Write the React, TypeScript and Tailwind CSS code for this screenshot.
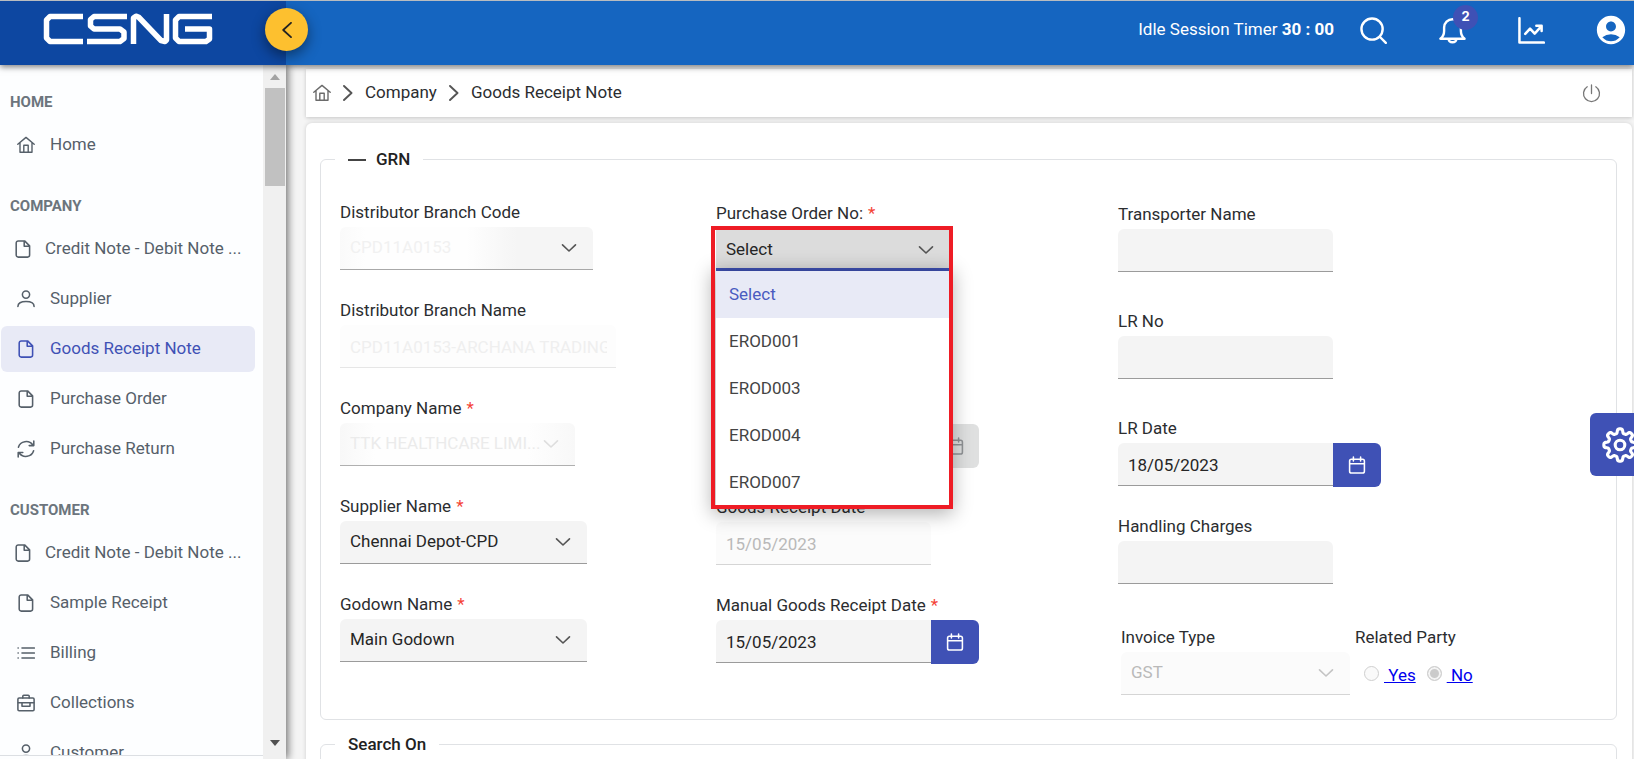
import React from "react";
import { MdAccountCircle } from "react-icons/md";

type IconProps = { className?: string };

function Glyph({ className = "size-[18px]", width = 1.55, box = 18, children }: { className?: string; width?: number; box?: number; children: React.ReactNode }) {
  return (
    <svg viewBox={`0 0 ${box} ${box}`} className={`shrink-0 ${className}`} fill="none" stroke="currentColor" strokeWidth={width} strokeLinecap="round" strokeLinejoin="round" aria-hidden="true">
      {children}
    </svg>
  );
}

const HomeIcon = ({ className }: IconProps) => (
  <Glyph className={className} width={1.4}>
    <path d="M.8 8.3 9 1.4l8.2 6.9M3 6.7v9.6h12V6.7M6.8 16V9.3h4.4V16" />
  </Glyph>
);
const FileIcon = ({ className }: IconProps) => (
  <Glyph className={className}>
    <path d="M4.2.9h6.4l5 5v9.2a2 2 0 0 1-2 2H4.2a2 2 0 0 1-2-2V2.900a2 2 0 0 1 2-2ZM10.200 1.200v5h5" />
  </Glyph>
);
const UserIcon = ({ className }: IconProps) => (
  <Glyph className={className}>
    <circle cx="9" cy="4.6" r="3.6" />
    <path d="M.9 16.4c0-3.300 3-4.900 8.100-4.900s8.100 1.600 8.100 4.900" />
  </Glyph>
);
const RefreshIcon = ({ className }: IconProps) => (
  <Glyph className={className}>
    <path d="M1.400 7.200A8 7.600 0 0 1 15.800 5M16.800 1v4.600h-4.600M16.600 10.800A8 7.600 0 0 1 2.200 13M1.200 17v-4.600h4.600" />
  </Glyph>
);
const ListIcon = ({ className }: IconProps) => (
  <Glyph className={className} width={1.6}>
    <path d="M5 4h12.300M5 9h12.300M5 14h12.300M1.100 4h.1M1.100 9h.1M1.100 14h.1" />
  </Glyph>
);
const BriefcaseIcon = ({ className }: IconProps) => (
  <Glyph className={className}>
    <rect x=".9" y="4" width="16.200" height="12.800" rx="1.200" />
    <path d="M5.800 4V2.200a1 1 0 0 1 1-1h4.400a1 1 0 0 1 1 1V4M1.200 8.800h15.600M5 8.900v3.300h8V8.900" />
  </Glyph>
);
const CalendarIcon = ({ className }: IconProps) => (
  <Glyph className={className}>
    <rect x="1.600" y="3.200" width="14.800" height="13.800" rx="1.800" />
    <path d="M1.800 7.800h14.400M5.400 1v4M12.600 1v4" />
  </Glyph>
);
const ChevronDown = ({ className = "" }: IconProps) => (
  <svg viewBox="0 0 16 10" className={`h-[10px] w-4 ${className}`} fill="none" stroke="currentColor" strokeWidth="1.600" strokeLinecap="round" strokeLinejoin="round" aria-hidden="true">
    <path d="m1.500 1.800 6.500 6.200 6.500-6.200" />
  </svg>
);
const ChevronRight = () => (
  <svg viewBox="0 0 10 16" className="h-4 w-[10px] text-[#555]" fill="none" stroke="currentColor" strokeWidth="1.900" strokeLinecap="round" strokeLinejoin="round" aria-hidden="true">
    <path d="m1 1 7.500 7L1 15" />
  </svg>
);

const gearOutline =
  Array.from({ length: 241 }, (_, i) => {
    const angle = (i / 240) * Math.PI * 2;
    const radius = 14 + 2.2 * Math.tanh(2.2 * Math.cos(8 * angle));
    return `${i === 0 ? "M" : "L"}${(18 + radius * Math.cos(angle)).toFixed(2)} ${(18 + radius * Math.sin(angle)).toFixed(2)}`;
  }).join("") + "Z";

const GearIcon = ({ className }: IconProps) => (
  <Glyph className={className} width={3.1} box={36}>
    <path d={gearOutline} />
    <circle cx="18" cy="18" r="4.800" />
  </Glyph>
);

const Logo = () => (
  <svg viewBox="0 0 170 32" className="ml-[43px] h-8 w-[170px] shrink-0" fill="none" stroke="#fff" strokeWidth="5.500" strokeLinejoin="round" aria-label="CSNG" role="img">
    <polyline points="40,3.500 7,3.500 3.500,7 3.500,25 7,28.500 40,28.500" />
    <polyline points="84,3.500 51,3.500 47.500,6.500 47.500,13 51,16 77,16 81,19 81,25.500 77,28.500 44,28.500" />
    <polyline points="90.500,31 90.500,5 93,3.200 95.500,4 118,27.500 122,28.500 123.500,27 123.500,1" />
    <polyline points="169,3.500 136,3.500 132.500,7 132.500,25 136,28.500 163,28.500 166.500,26 166.500,16 142,16" />
  </svg>
);

type Item = { label: string; icon: (p: IconProps) => React.JSX.Element; active?: boolean; wide?: boolean };
const sections: { title: string; items: Item[] }[] = [
  { title: "HOME", items: [{ label: "Home", icon: HomeIcon }] },
  {
    title: "COMPANY",
    items: [
      { label: "Credit Note - Debit Note ...", icon: FileIcon, wide: true },
      { label: "Supplier", icon: UserIcon },
      { label: "Goods Receipt Note", icon: FileIcon, active: true },
      { label: "Purchase Order", icon: FileIcon },
      { label: "Purchase Return", icon: RefreshIcon },
    ],
  },
  {
    title: "CUSTOMER",
    items: [
      { label: "Credit Note - Debit Note ...", icon: FileIcon, wide: true },
      { label: "Sample Receipt", icon: FileIcon },
      { label: "Billing", icon: ListIcon },
      { label: "Collections", icon: BriefcaseIcon },
      { label: "Customer", icon: UserIcon },
    ],
  },
];

function Sidebar() {
  return (
    <aside className="z-10 flex w-[286px] shrink-0 bg-[#fdfeff] shadow-[2px_0_8px_rgba(0,0,0,0.55)]">
      <nav className="mb-[3px] flex-1 overflow-hidden border-b border-[#dcdfe3] pt-[27px]">
        {sections.map((section) => (
          <div key={section.title} className="mb-7">
            <h2 className="px-[10px] text-[15px] leading-5 font-bold text-[#6c757d]">{section.title}</h2>
            <ul className="mt-[10px] flex flex-col gap-1">
              {section.items.map(({ label, icon: Icon, active, wide }) => (
                <li key={label} className="pr-2 pl-px">
                  <a
                    href="#"
                    className={`flex h-[46px] items-center rounded-md text-[17px] whitespace-nowrap ${active ? "bg-[#e8eaf6] text-[#3f51b5]" : "text-[#56606a]"} ${wide ? "gap-[13px] pl-[13px]" : "gap-[15px] pl-4"}`}
                  >
                    <Icon className="size-[18px]" />
                    {label}
                  </a>
                </li>
              ))}
            </ul>
          </div>
        ))}
      </nav>
      <div className="flex w-[23px] flex-col items-center bg-[#f0f0f0] pt-[9px] pb-[13px]" aria-hidden="true">
        <svg viewBox="0 0 10 6" className="h-[6px] w-[10px] text-[#a3a3a3]"><path d="M0 6 5 0l5 6z" fill="currentColor" /></svg>
        <div className="mt-2 h-[98px] w-5 bg-[#c1c1c1]" />
        <svg viewBox="0 0 10 6" className="mt-auto h-[6px] w-[10px] text-[#505050]"><path d="M0 0h10L5 6z" fill="currentColor" /></svg>
      </div>
    </aside>
  );
}

function Header() {
  return (
    <header className="relative z-20 flex h-[65px] shrink-0 border-t border-[#b8bcc0] bg-[#1565c0] text-white shadow-[0_2px_6px_rgba(0,0,0,0.5)]">
      <div className="relative flex w-[286px] shrink-0 items-start bg-[#0d47a1] pt-3">
        <Logo />
        <button type="button" aria-label="Collapse menu" className="absolute top-[7px] -right-[22px] z-10 flex size-[43px] items-center justify-center rounded-full bg-[#fdc02f] text-[#222] shadow-[0_5px_14px_rgba(0,0,0,0.45)]">
          <svg viewBox="0 0 10 16" className="h-4 w-[10px]" fill="none" stroke="currentColor" strokeWidth="1.800" strokeLinecap="round" strokeLinejoin="round" aria-hidden="true">
            <path d="M9 .8 1.200 8 9 15.200" />
          </svg>
        </button>
      </div>
      <div className="flex h-[58px] flex-1 items-center justify-end pr-[9px]">
        <p className="mr-[26px] text-[17px]">
          Idle Session Timer <b className="font-bold">30 : 00</b>
        </p>
        <div className="flex items-center gap-[52px]">
          <button type="button" aria-label="Search">
            <Glyph className="size-[27px]" width={2.500} box={28}>
              <circle cx="12.500" cy="12.500" r="11" />
              <path d="m20.500 20.500 6.300 6.300" />
            </Glyph>
          </button>
          <button type="button" aria-label="Notifications" className="relative">
            <Glyph className="size-[27px]" width={2.500} box={28}>
              <path d="M1.500 22.500h25c-2.500-2-3.800-4.500-3.800-8V11a8.700 8.700 0 0 0-17.400 0v3.500c0 3.500-1.300 6-3.800 8ZM10 22.800c.3 4.600 7.700 4.600 8 0" />
            </Glyph>
            <span className="absolute -top-3 left-[14px] flex size-[25px] items-center justify-center rounded-full bg-[#3f51b5] font-['Inter'] text-[13px] font-bold">2</span>
          </button>
          <button type="button" aria-label="Reports">
            <Glyph className="size-[27px]" width={2.600} box={28}>
              <path d="M1.500 1.200v25.300h25.300M7.500 17.500l5-5.500 4.800 5.300 7-7.800M19 9h5.500v5.500" />
            </Glyph>
          </button>
          <button type="button" aria-label="Account" className="-mx-[3px]">
            <MdAccountCircle className="size-[34px]" />
          </button>
        </div>
      </div>
    </header>
  );
}

const label = "flex h-[26px] items-start text-[17px] leading-[22px] whitespace-nowrap text-[#2b2d30]";
const control = "h-[43px] appearance-none rounded-t-md border-b pl-[10px] text-[17px] outline-none";
const plain = "border-[#9b9b9b] bg-[#f4f4f4] text-[#262626]";
const dimmed = "border-[#d5d5d5] bg-[#fbfbfb] text-[#b9b9b9]";
const Star = () => <span className="ml-[5px] text-[#f44336]">*</span>;

type FieldProps = {
  id: string;
  text?: string;
  required?: boolean;
  value?: string;
  width: string;
  tone?: string;
  disabled?: boolean;
  chevron?: string;
};

function FieldLabel({ id, text, required }: { id: string; text?: string; required?: boolean }) {
  return (
    <label htmlFor={id} className={label}>
      {text}
      {required && <Star />}
    </label>
  );
}

function SelectField({ id, text, required, value, width, tone = plain, disabled, chevron = "right-4 text-[#555]" }: FieldProps) {
  return (
    <div>
      <FieldLabel id={id} text={text} required={required} />
      <div className={`relative ${width}`}>
        <select id={id} disabled={disabled} className={`${control} ${tone} w-full opacity-100`}>
          <option>{value}</option>
        </select>
        <ChevronDown className={`pointer-events-none absolute top-4 ${chevron}`} />
      </div>
    </div>
  );
}

function TextField({ id, text, value = "", width, tone = plain, disabled }: FieldProps) {
  return (
    <div>
      <FieldLabel id={id} text={text} />
      <input id={id} type="text" defaultValue={value} disabled={disabled} className={`${control} ${tone} ${width} pt-[2px] pr-[9px]`} />
    </div>
  );
}

function DateField({ id, text, required, value = "", disabled }: Omit<FieldProps, "width">) {
  return (
    <div>
      <FieldLabel id={id} text={text} required={required} />
      <div className="flex h-[43px]">
        <input id={id} type="text" defaultValue={value} disabled={disabled} aria-label={text ? undefined : "Date"} className={`${control} ${disabled ? dimmed : plain} w-[215px] rounded-tr-none pt-[2px]`} />
        <button
          type="button"
          aria-label="Choose date"
          disabled={disabled}
          className={`flex h-11 w-12 items-center justify-center rounded-r-md ${disabled ? "bg-[#dfe0e0] text-[#909396]" : "bg-[#3f51b5] text-white"}`}
        >
          <CalendarIcon className="size-[18px]" />
        </button>
      </div>
    </div>
  );
}

const orders = ["Select", "EROD001", "EROD003", "EROD004", "EROD007"];

function PurchaseOrderField() {
  return (
    <div>
      <FieldLabel id="po" text="Purchase Order No:" required />
      <div className="relative z-10 w-[233px]">
        <select id="po" className="h-[43px] w-full appearance-none border-b-[3px] border-[#3f51b5] bg-[#dcdcdc] pt-1 pl-[10px] text-[17px] text-[#262626] outline-none">
          <option>Select</option>
        </select>
        <ChevronDown className="pointer-events-none absolute top-[17px] right-[15px] text-[#555]" />
        <ul role="listbox" aria-label="Purchase Order No" className="absolute top-full left-0 w-full bg-white shadow-[0_4px_18px_4px_rgba(0,0,0,0.3)]">
          {orders.map((order, i) => (
            <li
              key={order}
              role="option"
              aria-selected={i === 0}
              className={`flex h-[47px] items-center pl-[13px] text-[17px] ${i === 0 ? "bg-[#e8eaf6] text-[#4a5bc0]" : "text-[#444]"}`}
            >
              {order}
            </li>
          ))}
        </ul>
        <div className="pointer-events-none absolute -top-[2px] -right-1 -left-[5px] h-[283px] border-4 border-[#ee1c25]" />
      </div>
    </div>
  );
}

function Radio({ id, text, checked }: { id: string; text: string; checked?: boolean }) {
  return (
    <span className="flex items-center gap-[5px]">
      <input
        id={id}
        type="radio"
        name="related"
        disabled
        defaultChecked={checked}
        className="size-[15px] appearance-none rounded-full border border-[#cfcfcf] bg-[#fafafa] checked:bg-[#cbcbcb] checked:shadow-[inset_0_0_0_2px_#f4f4f4]"
      />
      <label htmlFor={id} className="pt-[3px] text-[17px] leading-[22px] whitespace-pre text-[#0000ee] underline">{` ${text}`}</label>
    </span>
  );
}

const panel = "relative min-w-0 rounded-md border border-[#e0e2e5]";
const legend = "ml-[14px] flex h-6 items-center bg-white px-[13px] pt-[2px] text-[17px] font-medium text-[#222]";

export default function App() {
  return (
    <div className="flex h-screen flex-col overflow-hidden bg-[#f5f5f5] font-['Roboto',sans-serif]">
      <Header />
      <div className="flex min-h-0 flex-1">
        <Sidebar />
        <main className="flex min-w-0 flex-1 flex-col gap-[6px] overflow-hidden pt-1 pr-[2px] pl-5">
          <nav aria-label="Breadcrumb" className="flex h-12 shrink-0 items-center bg-white pr-[31px] pl-[7px] text-[17px] text-[#2b2d30] shadow-[0_1px_4px_rgba(0,0,0,0.2)]">
            <a href="#" aria-label="Home" className="mr-3 text-[#6b6b6b]">
              <HomeIcon className="size-[18px]" />
            </a>
            <ChevronRight />
            <a href="#" className="mx-3">Company</a>
            <ChevronRight />
            <a href="#" className="ml-3">Goods Receipt Note</a>
            <button type="button" aria-label="Log out" className="ml-auto text-[#777]">
              <Glyph className="size-[19px]" width={1.300} box={19}>
                <path d="M9.500 1v8.500M5.200 2.800a8 8 0 1 0 8.600 0" />
              </Glyph>
            </button>
          </nav>

          <section className="flex-1 rounded-t-md bg-white pt-6 pr-[15px] pl-[14px] shadow-[0_0_4px_rgba(0,0,0,0.16)]">
            <fieldset className={`${panel} h-[573px]`}>
              <legend className={legend}>
                <svg viewBox="0 0 18 2" className="mr-[10px] h-[2px] w-[18px]" aria-hidden="true"><path d="M0 1h18" stroke="#444" strokeWidth="2" /></svg>
                GRN
              </legend>
              <div className="grid grid-cols-[376fr_402fr_498fr] pl-[19px]">
                <div className="flex flex-col gap-[29px] pt-[30px]">
                  <SelectField id="code" text="Distributor Branch Code" value="CPD11A0153" width="w-[253px]" tone="border-[#a8a8a8] bg-[linear-gradient(90deg,#fafafa,#fefefe_10%,#fefefe_50%,#f5f5f5_70%)] text-[#f1f1f1]" />
                  <TextField id="branch" text="Distributor Branch Name" value="CPD11A0153-ARCHANA TRADING" width="w-[276px]" disabled tone="border-[#e6e6e6] bg-[#fdfdfd] text-[#efefef]" />
                  <SelectField id="company" text="Company Name" required value="TTK HEALTHCARE LIMI..." width="w-[235px]" disabled tone="border-[#b0b0b0] bg-[linear-gradient(90deg,#f8f8f8,#fefefe_15%,#fefefe_80%,#f8f8f8)] text-[#ebebeb]" chevron="right-4 text-[#dedede]" />
                  <SelectField id="supplier" text="Supplier Name" required value="Chennai Depot-CPD" width="w-[247px]" />
                  <SelectField id="godown" text="Godown Name" required value="Main Godown" width="w-[247px]" />
                </div>
                <div className="flex flex-col gap-[29px] pt-[31px]">
                  <PurchaseOrderField />
                  <div className="h-[69px]" />
                  <DateField id="order-date" disabled />
                  <TextField id="receipt" text="Goods Receipt Date" value="15/05/2023" width="w-[215px]" disabled tone={dimmed} />
                  <DateField id="manual" text="Manual Goods Receipt Date" required value="15/05/2023" />
                </div>
                <div className="flex flex-col pt-8">
                  <div className="flex flex-col gap-[38px]">
                    <TextField id="transporter" text="Transporter Name" width="w-[215px]" />
                    <TextField id="lr-no" text="LR No" width="w-[215px]" />
                    <DateField id="lr-date" text="LR Date" value="18/05/2023" />
                  </div>
                  <div className="mt-[29px]">
                    <TextField id="handling" text="Handling Charges" width="w-[215px]" />
                  </div>
                  <div className="mt-[42px] ml-[3px] flex gap-[5px]">
                    <SelectField id="invoice" text="Invoice Type" value="GST" width="w-[229px]" disabled tone={dimmed} chevron="right-4 text-[#c4c4c4]" />
                    <div role="group" aria-labelledby="related-label">
                      <span id="related-label" className={label}>Related Party</span>
                      <div className="flex h-[43px] items-center gap-[11px] pl-[9px]">
                        <Radio id="related-yes" text="Yes" />
                        <Radio id="related-no" text="No" checked />
                      </div>
                    </div>
                  </div>
                </div>
              </div>
            </fieldset>
            <fieldset className={`${panel} mt-3 h-24`}>
              <legend className={legend}>Search On</legend>
            </fieldset>
          </section>
        </main>
      </div>
      <button type="button" aria-label="Settings" className="fixed top-[413px] right-0 z-30 flex h-[63px] w-11 items-center overflow-hidden rounded-l-md bg-[#3f51b5] pl-3 text-white">
        <GearIcon className="size-9" />
      </button>
    </div>
  );
}
